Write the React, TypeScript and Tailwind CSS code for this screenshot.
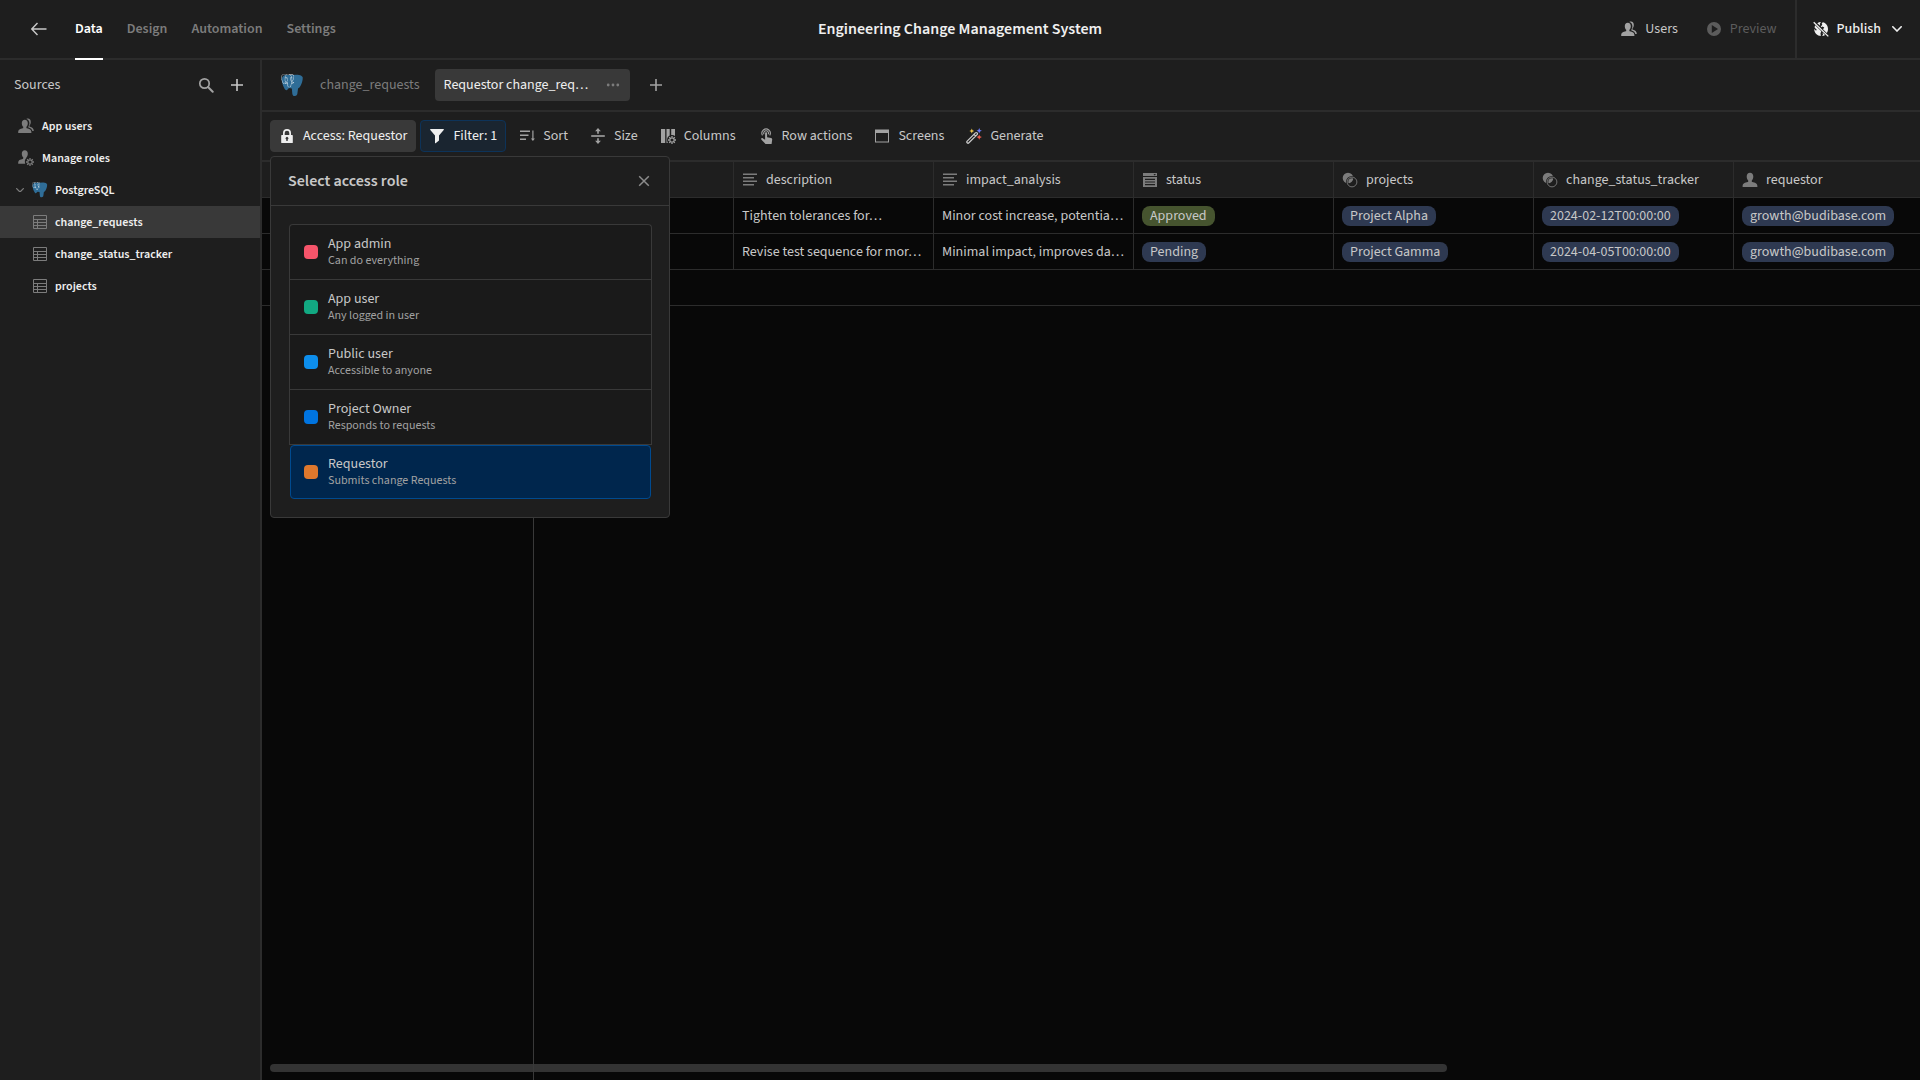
import { useState, type ReactNode } from "react";

import clsx from "clsx";
import { SiPostgresql } from "react-icons/si";

type IconProps = { className?: string };

const Svg = ({ className, children }: { className?: string; children: ReactNode }) => (
  <svg
    viewBox="0 0 16 16"
    fill="currentColor"
    aria-hidden="true"
    className={clsx("size-4 shrink-0", className)}
  >
    {children}
  </svg>
);

const personPath =
  "M8 .8c2 0 3.3 1.5 3.3 3.8 0 1.6-.6 3-1.5 3.9v.9c0 .4.2.6.5.7 2.6.5 5.1 1.3 5.1 4.1v.8H.6v-.8c0-2.8 2.5-3.6 5.1-4.1.3-.1.5-.3.5-.7v-.9c-.9-.9-1.5-2.3-1.5-3.9C4.7 2.300 6 .8 8 .8z";

const Gear = () => (
  <g fill="none" stroke="currentColor">
    <circle cx="12" cy="12" r="2.2" strokeWidth="1.2" />
    <path
      d="M12 8v1.300M12 14.700V16M8 12h1.300M14.700 12H16M9.200 9.200l.9.9M13.900 13.900l.9.9M14.800 9.200l-.9.9M10.100 13.900l-.9.9"
      strokeWidth="1.3"
    />
  </g>
);

const UserIcon = ({ className }: IconProps) => (
  <Svg className={className}>
    <path d={personPath} />
  </Svg>
);

const UsersIcon = ({ className }: IconProps) => (
  <Svg className={className}>
    <path d="M6.800 1.700c1.900 0 3 1.400 3 3.500 0 1.500-.5 2.800-1.400 3.600v.9c0 .3.200.5.500.6 2.300.5 4.500 1.200 4.500 3.900v.9H.2v-.9c0-2.700 2.200-3.400 4.500-3.900.3-.1.500-.3.500-.6v-.9c-.9-.8-1.400-2.100-1.400-3.600 0-2.100 1.100-3.500 3-3.500z" />
    <path d="M8.300.9c.5-.3 1-.4 1.600-.4 1.900 0 2.900 1.300 2.900 3.400 0 1.500-.5 2.700-1.300 3.500v.8c0 .3.200.5.500.6 1.900.5 3.800 1.500 3.800 4.200h-1.500c-.3-1.900-1.800-2.900-3.900-3.400V8.500c.6-.9 1-2 1-3.300 0-2.100-1.100-3.800-3.100-4.300z" />
  </Svg>
);

const RolesIcon = ({ className }: IconProps) => (
  <Svg className={className}>
    <path d="M6.800.2c1.900 0 3 1.400 3 3.500 0 1.500-.5 2.800-1.400 3.600v.7c-1.100 1-1.700 2.300-1.500 4 0 .6.200 1.200.4 1.700H.2v-.9c0-2.700 2.200-3.400 4.500-3.900.3-.1.500-.3.500-.6v-1c-.9-.8-1.400-2.100-1.400-3.600 0-2.100 1.100-3.500 3-3.500z" />
    <Gear />
  </Svg>
);

const BackIcon = () => (
  <Svg>
    <path d="M6.500 2 .8 8l5.700 6M1 8h14.500" fill="none" stroke="currentColor" strokeWidth="1.4" />
  </Svg>
);

const PlayIcon = () => (
  <Svg>
    <path
      fillRule="evenodd"
      d="M8 1a7 7 0 1 1 0 14A7 7 0 0 1 8 1zM5.800 4.100v7.800L12 8z"
    />
  </Svg>
);

const GlobeStrikeIcon = () => (
  <Svg>
    <path d="M4.300 2.200A7 7 0 0 1 8 1l-1.200 1.700.4 2zM9.800 1.200c2.900.7 5.200 3.300 5.200 6.700 0 1.600-.5 3-1.300 4.100L10 8.200 11.300 6.500 9.500 5.500l-1 .8L7.800 5.500l1.500-1.700-.6-1.200z" />
    <path d="M2.200 4.200 8.300 10.200l-.8 2 .3 2.800C4.400 15 1.200 12 1.200 8l1.600 1.500L4 9 2.500 7.500 1.500 6.200zM9.500 11.500l2.600 2.500c-.8.500-1.800.9-2.900 1l.8-1.500z" />
    <path d="M.7 1.200 15.300 15.400" stroke="currentColor" strokeWidth="1.3" />
  </Svg>
);

const ChevronIcon = ({ className }: IconProps) => (
  <svg viewBox="0 0 10 6" className={clsx("shrink-0", className)} fill="none" aria-hidden="true">
    <path d="M.8.8 5 5 9.200.8" stroke="currentColor" strokeWidth="1.6" strokeLinecap="round" />
  </svg>
);

const SearchIcon = () => (
  <Svg>
    <circle cx="6.5" cy="6.5" r="4.7" fill="none" stroke="currentColor" strokeWidth="1.7" />
    <path d="m10 10 4.700 4.700" stroke="currentColor" strokeWidth="2" strokeLinecap="round" />
  </Svg>
);

const PlusIcon = ({ className }: IconProps) => (
  <Svg className={className}>
    <path d="M7.200 2h1.600v5.200H14v1.600H8.800V14H7.200V8.800H2V7.200h5.200z" />
  </Svg>
);

const TableIcon = () => (
  <Svg>
    <path
      d="M1.500 1.500h13v13h-13zM1.500 5.500h13M1.500 8.500h13M1.500 11.500h13M5.500 5.500v9"
      fill="none"
      stroke="currentColor"
    />
  </Svg>
);

const DotsIcon = () => (
  <Svg>
    <circle cx="3.2" cy="8" r="1.4" />
    <circle cx="8" cy="8" r="1.4" />
    <circle cx="12.8" cy="8" r="1.4" />
  </Svg>
);

const LockIcon = () => (
  <Svg>
    <path
      fillRule="evenodd"
      d="M4 7V5a4 4 0 0 1 8 0v2h1.200c.3 0 .6.300.6.600v6.800c0 .3-.3.600-.6.600H2.800a.6.600 0 0 1-.6-.6V7.600c0-.3.3-.6.6-.6zm1.700 0h4.600V5a2.300 2.300 0 0 0-4.600 0zm1.600 4.600V13h1.400v-1.400a1.400 1.400 0 1 0-1.400 0z"
    />
  </Svg>
);

const FilterIcon = () => (
  <Svg>
    <path d="M1.700 1h12.600c.5 0 .7.600.4.900L10 7.500v5L6.600 15.200c-.3.200-.6 0-.6-.3V7.500L1.300 1.900c-.3-.3-.1-.9.4-.9z" />
  </Svg>
);

const SortIcon = () => (
  <Svg>
    <path d="M1 2.500h10v1.400H1zM1 6.500h8.500v1.400H1zM1 10.500h6v1.400H1z" />
    <path d="M13.300 2.500h1.200v8h1.400l-2 2.600-2-2.600h1.400z" />
  </Svg>
);

const SizeIcon = () => (
  <Svg>
    <path d="M1.200 7.200h13.600v1.600H1.200z" />
    <path d="M8 0l2.900 3.200H8.800v2.600H7.200V3.200H5.100zM8 16l2.900-3.200H8.800v-2.600H7.200v2.600H5.100z" />
  </Svg>
);

const ColumnsIcon = () => (
  <Svg>
    <path d="M1 1h4.200v14H1zM6.500 1h3.200v6.600c-1.600.9-2.600 2.400-2.600 4.300 0 1.100.3 2.100.8 3H6.500zM11.200 1H15v7a5 5 0 0 0-3.800-.9z" />
    <Gear />
  </Svg>
);

const TapIcon = () => (
  <Svg>
    <path
      d="M4.500 7.400a4.200 4.200 0 1 1 7.200 0M6 6.300a2.400 2.400 0 1 1 4.200 0"
      fill="none"
      stroke="currentColor"
      strokeWidth="1.1"
    />
    <path d="M8.100 4.200c.6 0 1 .5 1 1v4l4 .8c.8.200 1.200.8 1.100 1.500L13.600 16H7.500L3.300 11.500c-.3-.4-.2-.9.200-1.200.5-.3 1-.2 1.500.1l2.100 1.400V5.200c0-.5.400-1 1-1z" />
  </Svg>
);

const ScreenIcon = () => (
  <Svg>
    <path fillRule="evenodd" d="M1 1.500h14v13H1zm1 3.500v8.500h12V5z" />
  </Svg>
);

const WandIcon = () => (
  <Svg>
    <path
      d="M1.200 14.800c-.7-.7-.4-1.300 0-1.700l8.200-8.200c.5-.5 1.200-.5 1.700 0s.5 1.200 0 1.700l-8.200 8.200c-.4.4-1 .7-1.700 0zM8 6.400 9.700 8"
      fill="none"
      stroke="#c8c8c8"
      strokeWidth="1.3"
    />
    <path d="m5.800.6.7 1.700 1.700.7-1.700.7-.7 1.700-.7-1.700L3.400 3l1.700-.7z" fill="#f2c94c" />
    <path d="m13.200 0 .8 1.900 1.900.8-1.900.8-.8 1.900-.8-1.900-1.900-.8 1.900-.8z" fill="#6b7cff" />
    <path d="m13.200 6.400.8 1.900 1.900.8-1.900.8-.8 1.900-.8-1.900-1.900-.8 1.900-.8z" fill="#ec5b4a" />
  </Svg>
);

const TextIcon = () => (
  <Svg>
    <path d="M1 1.500h14V3H1zM1 5h11v1.500H1zM1 8.500h14V10H1zM1 12h11v1.500H1z" />
  </Svg>
);

const OptionsIcon = () => (
  <Svg>
    <path
      fillRule="evenodd"
      d="M1 1h14v3H1zm10.500 1 1.200 1.400L13.900 2zM1 5h14v10H1zm2 1.800V8h10V6.800zm0 2.600v1.200h10V9.400zM3 12v1.200h10V12z"
    />
  </Svg>
);

const RelationIcon = () => (
  <Svg>
    <circle cx="6" cy="6" r="5.3" />
    <circle cx="10" cy="10" r="4.9" fill="none" stroke="#1e1e1e" strokeWidth="2.4" />
    <circle cx="10" cy="10" r="4.9" fill="none" stroke="currentColor" strokeWidth=".9" />
  </Svg>
);

const CloseIcon = () => (
  <Svg>
    <path d="m3.200 3.200 9.600 9.600m0-9.600-9.600 9.600" stroke="currentColor" strokeWidth="1.5" />
  </Svg>
);

const PostgresLogo = ({ className }: IconProps) => (
  <svg viewBox="0 0 24 24" className={clsx("shrink-0", className)} aria-hidden="true">
    <path
      d="M5.200 1C2.600 1 .8 3 .8 6c0 3 2 8.500 3.800 10.500.8.700 1.700.4 2.500-.6l1.200-1.300 3 .5.500 5.500c.3 2 1.300 2.600 2.700 2.400 1.600-.2 2.400-1 2.600-2.600l.7-5.400 1.700-1.300c2-2.500 3.400-7 3.200-10C22.500 1.500 19 .5 16.500.700L10 1z"
      fill="#2f6d97"
    />
    <SiPostgresql x="0" y="0" width="24" height="24" color="#dfe9ef" />
  </svg>
);

const navItems = ["Data", "Design", "Automation", "Settings"];

const tables = ["change_requests", "change_status_tracker", "projects"];

const tools = [
  { label: "Sort", icon: <SortIcon /> },
  { label: "Size", icon: <SizeIcon /> },
  { label: "Columns", icon: <ColumnsIcon /> },
  { label: "Row actions", icon: <TapIcon /> },
  { label: "Screens", icon: <ScreenIcon /> },
  { label: "Generate", icon: <WandIcon /> },
];

const roles = [
  { name: "App admin", description: "Can do everything", color: "bg-[#f6546a]" },
  { name: "App user", description: "Any logged in user", color: "bg-[#12a982]" },
  { name: "Public user", description: "Accessible to anyone", color: "bg-[#0d8eec]" },
  { name: "Project Owner", description: "Responds to requests", color: "bg-[#0074e0]" },
  { name: "Requestor", description: "Submits change Requests", color: "bg-[#de782d]" },
];

const columns = [
  { name: "description", icon: <TextIcon /> },
  { name: "impact_analysis", icon: <TextIcon /> },
  { name: "status", icon: <OptionsIcon /> },
  { name: "projects", icon: <RelationIcon /> },
  { name: "change_status_tracker", icon: <RelationIcon /> },
  { name: "requestor", icon: <UserIcon /> },
];

const rows = [
  {
    description: "Tighten tolerances for…",
    impact: "Minor cost increase, potentia…",
    status: "Approved",
    project: "Project Alpha",
    tracker: "2024-02-12T00:00:00",
    requestor: "growth@budibase.com",
  },
  {
    description: "Revise test sequence for mor…",
    impact: "Minimal impact, improves da…",
    status: "Pending",
    project: "Project Gamma",
    tracker: "2024-04-05T00:00:00",
    requestor: "growth@budibase.com",
  },
];

const cellClass = "h-9 overflow-hidden whitespace-nowrap border-b border-r border-[#2c2c2c] px-2";
const toolClass = "flex h-8 items-center gap-2 rounded border px-2";

const Badge = ({ children, green }: { children: ReactNode; green?: boolean }) => (
  <span
    className={clsx(
      "inline-flex h-5 items-center rounded-lg px-2 align-middle",
      green ? "bg-[#46542f]" : "bg-[#2e3951]"
    )}
  >
    {children}
  </span>
);

const Header = () => (
  <header className="grid h-[60px] grid-cols-[1fr_auto_1fr] items-center border-b-2 border-[#2c2c2c] leading-[19px]">
    <div className="flex items-center self-stretch">
      <button type="button" aria-label="Back" className="ml-[31px] mr-7 text-[#c8c8c8]">
        <BackIcon />
      </button>
      <nav className="-mb-0.5 flex gap-6 self-stretch font-semibold">
        {navItems.map((item) => (
          <a
            key={item}
            href="#"
            className={clsx(
              "flex items-center border-b-2",
              item === "Data" ? "border-white text-white" : "border-transparent text-[#7c7c7c]"
            )}
          >
            {item}
          </a>
        ))}
      </nav>
    </div>
    <h1 className="text-base leading-[21px] font-semibold text-[#efefef]">
      Engineering Change Management System
    </h1>
    <div className="flex items-center justify-end self-stretch">
      <button type="button" className="flex items-center gap-2">
        <UsersIcon className="text-[#a2a2a2]" />
        Users
      </button>
      <button type="button" disabled className="ml-7 mr-[18px] flex items-center gap-2 text-[#5c5c5c]">
        <PlayIcon />
        Preview
      </button>
      <button
        type="button"
        className="flex items-center gap-2 self-stretch border-l-2 border-[#2c2c2c] pl-4 pr-[18px] font-medium text-[#efefef]"
      >
        <GlobeStrikeIcon />
        Publish
        <ChevronIcon className="ml-[3px] w-[10px]" />
      </button>
    </div>
  </header>
);

const Sidebar = () => (
  <aside className="w-[262px] shrink-0 border-r-2 border-[#2c2c2c]">
    <div className="flex h-[50px] items-center pl-[14px] pr-[15px]">
      <h2 className="flex-1">Sources</h2>
      <button type="button" aria-label="Search" className="mr-[15px] text-[#a2a2a2]">
        <SearchIcon />
      </button>
      <button type="button" aria-label="Add source" className="text-[#c8c8c8]">
        <PlusIcon />
      </button>
    </div>
    <ul className="text-xs leading-[17px] font-semibold text-[#efefef]">
      <li>
        <a href="#" className="flex h-8 items-center gap-2 pl-[18px]">
          <UsersIcon className="text-[#7c7c7c]" />
          App users
        </a>
      </li>
      <li>
        <a href="#" className="flex h-8 items-center gap-2 pl-[18px]">
          <RolesIcon className="text-[#7c7c7c]" />
          Manage roles
        </a>
      </li>
      <li>
        <a href="#" className="flex h-8 items-center pl-4">
          <ChevronIcon className="mr-2 w-2 text-[#7c7c7c]" />
          <PostgresLogo className="mr-[7px] size-4" />
          PostgreSQL
        </a>
      </li>
      {tables.map((table) => (
        <li key={table}>
          <a
            href="#"
            className={clsx(
              "flex h-8 items-center gap-[7px] pl-8",
              table === "change_requests" && "bg-[#393939]"
            )}
          >
            <span className="text-[#7c7c7c]">
              <TableIcon />
            </span>
            {table}
          </a>
        </li>
      ))}
    </ul>
  </aside>
);

const RolePopover = ({ onClose }: { onClose: () => void }) => {
  const [selected, setSelected] = useState("Requestor");

  return (
    <div
      role="dialog"
      aria-label="Select access role"
      className="absolute left-0 top-full z-10 mt-1 w-[400px] rounded border border-[#393939] bg-[#1e1e1e]"
    >
      <div className="flex h-[49px] items-center justify-between border-b border-[#393939] px-[17px]">
        <h2 className="text-base leading-[22px] font-semibold">Select access role</h2>
        <button type="button" aria-label="Close" className="text-[#8c8c8c]" onClick={onClose}>
          <CloseIcon />
        </button>
      </div>
      <ul className="py-[18px] pl-[18px] pr-[17px]">
        {roles.map((role) => {
          const active = role.name === selected;
          return (
            <li
              key={role.name}
              className={clsx(
                "border-t border-[#393939] first:rounded-t",
                active ? "px-px" : "border-x bg-[#1a1a1a]"
              )}
            >
              <button
                type="button"
                onClick={() => setSelected(role.name)}
                className={clsx(
                  "flex h-[54px] w-full items-center gap-[10px] text-left",
                  active ? "rounded border border-[#004a8f] bg-[#00264d] px-[13px]" : "px-[14px]"
                )}
              >
                <span className={clsx("size-[14px] rounded", role.color)} />
                <span className="flex flex-col">
                  <span>{role.name}</span>
                  <span className="text-xs text-[#a2a2a2]">{role.description}</span>
                </span>
              </button>
            </li>
          );
        })}
      </ul>
    </div>
  );
};

const Toolbar = () => {
  const [open, setOpen] = useState(true);

  return (
    <div className="flex h-[50px] items-center gap-1 border-b-2 border-[#2c2c2c] px-2">
      <div className="relative">
        <button
          type="button"
          onClick={() => setOpen(!open)}
          className={clsx(toolClass, "border-[#393939] bg-[#393939] text-[#efefef]")}
        >
          <LockIcon />
          Access: Requestor
        </button>
        {open && <RolePopover onClose={() => setOpen(false)} />}
      </div>
      <button
        type="button"
        className={clsx(toolClass, "border-[#0d3359] bg-[#1a2530] text-[#efefef]")}
      >
        <FilterIcon />
        Filter: 1
      </button>
      {tools.map((tool) => (
        <button key={tool.label} type="button" className={clsx(toolClass, "border-transparent")}>
          <span className="text-[#a2a2a2]">{tool.icon}</span>
          {tool.label}
        </button>
      ))}
    </div>
  );
};

const Grid = () => (
  <div className="relative flex-1 overflow-hidden bg-[#080808]">
    <table className="w-max table-fixed border-separate border-spacing-0">
      <colgroup>
        <col className="w-[272px]" />
        <col className="w-[200px]" />
        {columns.map((column) => (
          <col key={column.name} className="w-[200px]" />
        ))}
      </colgroup>
      <thead className="bg-[#1e1e1e] text-left">
        <tr>
          <td className={cellClass} />
          <td className={cellClass} />
          {columns.map((column) => (
            <th key={column.name} scope="col" className={clsx(cellClass, "font-normal")}>
              <span className="flex items-center gap-2">
                <span className="text-[#7c7c7c]">{column.icon}</span>
                {column.name}
              </span>
            </th>
          ))}
        </tr>
      </thead>
      <tbody>
        {rows.map((row) => (
          <tr key={row.tracker}>
            <td className={cellClass} />
            <td className={cellClass} />
            <td className={cellClass}>{row.description}</td>
            <td className={cellClass}>{row.impact}</td>
            <td className={cellClass}>
              <Badge green={row.status === "Approved"}>{row.status}</Badge>
            </td>
            <td className={cellClass}>
              <Badge>{row.project}</Badge>
            </td>
            <td className={cellClass}>
              <Badge>{row.tracker}</Badge>
            </td>
            <td className={cellClass}>
              <Badge>{row.requestor}</Badge>
            </td>
          </tr>
        ))}
        <tr>
          <td colSpan={8} className={cellClass} />
        </tr>
      </tbody>
    </table>
    <div className="absolute bottom-2 left-2 h-2 w-[71%] rounded-full bg-[#333333]" />
    {/* edge of the pinned column */}
    <div className="absolute inset-y-0 left-[271px] w-px bg-[#393939]" />
  </div>
);

export default function App() {
  return (
    <div className="flex min-h-screen flex-col bg-[#1e1e1e] font-['Source_Sans_3','Noto_Sans_CJK_SC',sans-serif] text-sm leading-[18px] text-[#c8c8c8]">
      <Header />
      <div className="flex flex-1">
        <Sidebar />
        <main className="flex min-w-0 flex-1 flex-col">
          <div className="flex h-[52px] items-center border-b-2 border-[#2c2c2c] pl-[19px]">
            <PostgresLogo className="mr-4 size-[23px]" />
            <a href="#" className="mr-[15px] text-[#7c7c7c]">
              change_requests
            </a>
            <div className="flex h-8 w-[195px] items-center justify-between rounded bg-[#393939] px-[9px]">
              <a href="#" className="text-[#efefef]">
                Requestor change_req…
              </a>
              <button type="button" aria-label="View options" className="text-[#7c7c7c]">
                <DotsIcon />
              </button>
            </div>
            <button type="button" aria-label="Create view" className="ml-[18px] text-[#a2a2a2]">
              <PlusIcon />
            </button>
          </div>
          <Toolbar />
          <Grid />
        </main>
      </div>
    </div>
  );
}
